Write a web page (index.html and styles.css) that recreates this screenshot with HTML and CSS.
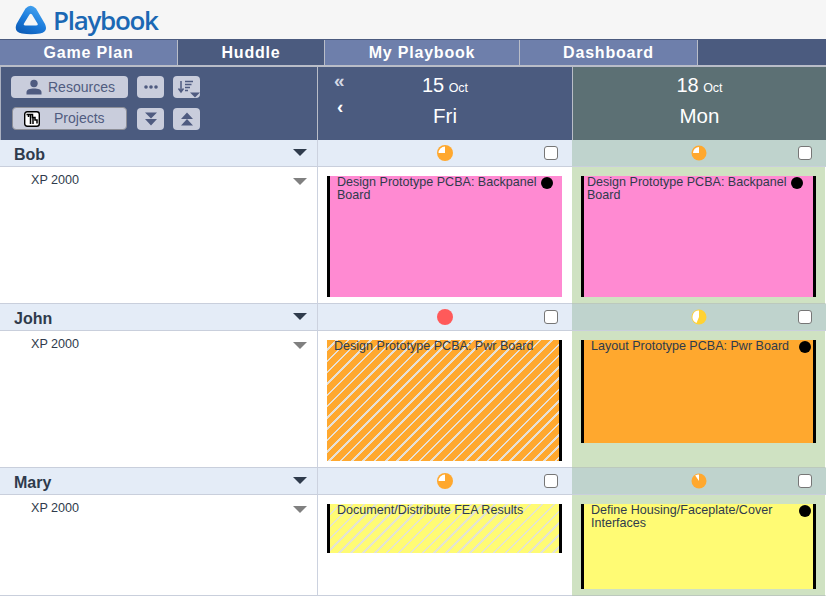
FILE: index.html
```html
<!DOCTYPE html>
<html lang="en">
<head>
<meta charset="utf-8">
<title>Playbook</title>
<link rel="stylesheet" href="styles.css">
</head>
<body>
<div class="page">
  <header class="brand">
    <svg class="logo" width="32" height="30" viewBox="0 0 32 30">
      <defs>
        <linearGradient id="lg" x1="0.750" y1="0" x2="0.150" y2="1">
          <stop offset="0" stop-color="#4aa8f2"/>
          <stop offset="0.500" stop-color="#1c7cdc"/>
          <stop offset="1" stop-color="#0c5ab4"/>
        </linearGradient>
      </defs>
      <path fill="url(#lg)" fill-rule="evenodd" d="M10.500 3.500 Q15.500 -2 21 3.500 L30 19 Q33.500 27 25 28.500 Q16 30 7 28.500 Q-1.500 27 1.500 19 Z M14.500 9.500 L9 18.500 Q8 20.500 10.500 20.500 H21 Q23.500 20.500 22.500 18.500 L17 9.500 Q15.800 7.800 14.500 9.500 Z"/>
    </svg>
    <span class="wordmark">Playbook</span>
  </header>

  <nav class="tabs">
    <a class="tab tab-gameplan">Game Plan</a>
    <a class="tab tab-huddle tab-active">Huddle</a>
    <a class="tab tab-my">My Playbook</a>
    <a class="tab tab-dash">Dashboard</a>
  </nav>

  <main class="board">
    <div class="toolbar">
      <div class="tool-row">
        <button class="btn btn-wide">
          <svg width="16" height="16" viewBox="0 0 16 16"><circle cx="8" cy="4.500" r="3.700" fill="#4f5b80"/><path d="M0.500 15.500 V13 C0.500 10.500 4 9.500 8 9.500 C12 9.500 15.500 10.500 15.500 13 V15.500 Z" fill="#4f5b80"/></svg>
          <span class="btn-label">Resources</span>
        </button>
        <button class="btn btn-icon">
          <svg width="16" height="6" viewBox="0 0 16 6"><circle cx="3" cy="3" r="1.800" fill="#4f5b80"/><circle cx="8" cy="3" r="1.800" fill="#4f5b80"/><circle cx="13" cy="3" r="1.800" fill="#4f5b80"/></svg>
        </button>
        <button class="btn btn-icon btn-sort">
          <svg width="27" height="22" viewBox="0 0 27 22">
            <path d="M8 5 V15 M5.500 12.500 L8 16 L10.500 12.500" fill="none" stroke="#4f5b80" stroke-width="1.500"/>
            <path d="M12 5.500 H20 M12 8.500 H18.500 M12 11.500 H17 M12 14.500 H15" stroke="#4f5b80" stroke-width="1.500"/>
            <path d="M17 16.500 H27 L22 21.500 Z" fill="#4f5b80"/>
          </svg>
        </button>
      </div>
      <div class="tool-row">
        <button class="btn btn-wide btn-outline">
          <svg width="16" height="16" viewBox="0 0 16 16">
            <rect x="0.700" y="0.700" width="14.600" height="14.600" rx="2.500" fill="#fff" stroke="#000" stroke-width="1.400"/>
            <path d="M2.500 3.500 H8.500 V6.500 H11 V9 H13 V12.500 M4.500 3.500 V6 M6.500 3.500 V13 M9 6.500 V13" fill="none" stroke="#000" stroke-width="1.500"/>
          </svg>
          <span class="btn-label btn-label-projects">Projects</span>
        </button>
        <button class="btn btn-icon btn-square">
          <svg width="14" height="14" viewBox="0 0 14 14"><path d="M1 0.500 H13 L7 6.500 Z M1 7 H13 L7 13.500 Z" fill="#4f5b80"/></svg>
        </button>
        <button class="btn btn-icon btn-square">
          <svg width="14" height="14" viewBox="0 0 14 14"><path d="M7 0.500 L13 7 H1 Z M7 7 L13 13.500 H1 Z" fill="#4f5b80"/></svg>
        </button>
      </div>
    </div>

    <div class="day day-first">
      <div class="day-nav">
        <span class="arrow arrow-double">«</span>
        <span class="arrow arrow-single">‹</span>
      </div>
      <div class="day-title">
        <div class="day-date"><span class="day-num">15</span> <span class="day-month">Oct</span></div>
        <div class="day-name">Fri</div>
      </div>
    </div>
    <div class="day day-today">
      <div class="day-nav"></div>
      <div class="day-title">
        <div class="day-date"><span class="day-num">18</span> <span class="day-month">Oct</span></div>
        <div class="day-name">Mon</div>
      </div>
    </div>

    <!-- Bob -->
    <div class="person"><span class="person-name">Bob</span><span class="tri tri-dark"></span></div>
    <div class="day-head">
      <svg class="pie" width="16" height="16" viewBox="0 0 16 16"><circle cx="8" cy="8" r="8" fill="#ffa82e"/><path d="M8 8 H1.500 A6.500 6.500 0 0 1 8 1.500 Z" fill="#fff"/></svg>
      <input class="check" type="checkbox">
    </div>
    <div class="day-head day-head-today">
      <svg class="pie" width="16" height="16" viewBox="0 0 16 16"><circle cx="8" cy="8" r="7.500" fill="#ffa82e"/><path d="M8 8 H2 A6 6 0 0 1 8 2 Z" fill="#fff"/></svg>
      <input class="check" type="checkbox">
    </div>
    <div class="project"><span class="project-name">XP 2000</span><span class="tri tri-grey"></span></div>
    <div class="slot">
      <div class="card card-pink edge-left h-tall">
        <span class="card-text">Design Prototype PCBA: Backpanel Board</span>
        <i class="dot dot-bob-first"></i>
      </div>
    </div>
    <div class="slot slot-today">
      <div class="card card-pink edge-left edge-right h-tall pad-tight">
        <span class="card-text">Design Prototype PCBA: Backpanel Board</span>
        <i class="dot dot-bob-today"></i>
      </div>
    </div>

    <!-- John -->
    <div class="person"><span class="person-name">John</span><span class="tri tri-dark"></span></div>
    <div class="day-head">
      <svg class="pie" width="16" height="16" viewBox="0 0 16 16"><circle cx="8" cy="8" r="8" fill="#ff5a5a"/></svg>
      <input class="check" type="checkbox">
    </div>
    <div class="day-head day-head-today">
      <svg class="pie" width="16" height="16" viewBox="0 0 16 16"><circle cx="8" cy="8" r="7.500" fill="#ffd233"/><path d="M8 8 L5.500 14 A6.500 6.500 0 0 1 8 1.500 Z" fill="#fff"/></svg>
      <input class="check" type="checkbox">
    </div>
    <div class="project"><span class="project-name">XP 2000</span><span class="tri tri-grey"></span></div>
    <div class="slot">
      <div class="card card-orange-striped edge-right h-tall">
        <span class="card-text">Design Prototype PCBA: Pwr Board</span>
      </div>
    </div>
    <div class="slot slot-today">
      <div class="card card-orange edge-left edge-right h-mid">
        <span class="card-text">Layout Prototype PCBA: Pwr Board</span>
        <i class="dot"></i>
      </div>
    </div>

    <!-- Mary -->
    <div class="person"><span class="person-name">Mary</span><span class="tri tri-dark"></span></div>
    <div class="day-head">
      <svg class="pie" width="16" height="16" viewBox="0 0 16 16"><circle cx="8" cy="8" r="8" fill="#ffa82e"/><path d="M8 8 H1.500 A6.500 6.500 0 0 1 8 1.500 Z" fill="#fff"/></svg>
      <input class="check" type="checkbox">
    </div>
    <div class="day-head day-head-today">
      <svg class="pie" width="16" height="16" viewBox="0 0 16 16"><circle cx="8" cy="8" r="7.500" fill="#ffa82e"/><path d="M8 8 L4.200 2.500 A6.500 6.500 0 0 1 8 1.500 Z" fill="#fff"/></svg>
      <input class="check" type="checkbox">
    </div>
    <div class="project project-last"><span class="project-name">XP 2000</span><span class="tri tri-grey"></span></div>
    <div class="slot slot-last">
      <div class="card card-yellow-striped edge-left edge-right h-short">
        <span class="card-text">Document/Distribute FEA Results</span>
      </div>
    </div>
    <div class="slot slot-today slot-last">
      <div class="card card-yellow edge-left edge-right h-long">
        <span class="card-text">Define Housing/Faceplate/Cover Interfaces</span>
        <i class="dot"></i>
      </div>
    </div>
  </main>
</div>
</body>
</html>
```

FILE: styles.css
```css
* { box-sizing: border-box; }

html, body {
  margin: 0;
  padding: 0;
  background: #fff;
}

.page {
  width: 826px;
  height: 596px;
  overflow: hidden;
  font-family: "Liberation Sans", Arial, sans-serif;
  color: #2f3b4c;
}

/* Brand */
.brand {
  height: 39px;
  background: #f6f6f6;
  display: flex;
  align-items: center;
  padding-left: 15px;
  gap: 6px;
}

.wordmark {
  font-family: "Open Sans", sans-serif;
  font-size: 26px;
  font-weight: 600;
  letter-spacing: -1.300px;
  color: #1b68b4;
  line-height: 30px;
  padding-top: 1px;
}

/* Tabs */
.tabs {
  height: 28px;
  display: flex;
  background: #4b5b7f;
  border-top: 1px solid #4b5b7f;
  border-bottom: 2px solid #b9bdc8;
}

.tab {
  display: flex;
  align-items: center;
  justify-content: center;
  background: #6e7fab;
  color: #fff;
  font-size: 16px;
  font-weight: 700;
  letter-spacing: 0.800px;
  border-right: 1px solid #b9bdc8;
}

.tab-active { background: #4b5b7f; }
.tab-gameplan { width: 178px; }
.tab-huddle { width: 147px; }
.tab-my { width: 195px; }
.tab-dash { width: 178px; }

/* Board grid */
.board {
  display: grid;
  grid-template-columns: 318px 254px 254px;
  grid-template-rows: 73px 27px 137px 27px 137px 27px 101px;
}

/* Toolbar */
.toolbar {
  background: #4b5b7f;
  border-left: 1px solid #aab0c0;
  border-right: 1px solid #b9bdc8;
  padding: 9px 0 0 10px;
  display: flex;
  flex-direction: column;
  gap: 9px;
}

.tool-row {
  display: flex;
  gap: 9px;
}

.btn {
  height: 22px;
  border: 0;
  padding: 0;
  background: #c9cddc;
  border-radius: 4px;
  color: #505c80;
  font-family: inherit;
  font-size: 14px;
  display: flex;
  align-items: center;
  justify-content: center;
}

.btn-wide {
  width: 117px;
  justify-content: flex-start;
  padding-left: 15px;
  gap: 6px;
}

.btn-outline {
  height: 23px;
  width: 115px;
  margin: 0 1px;
  border: 1px solid #8d8f98;
  padding-left: 11px;
  padding-bottom: 2px;
}

.btn-outline svg { margin-top: 2px; }

.btn-label-projects {
  margin-left: 8px;
}

.btn-icon { width: 27px; }
.btn-square { margin-top: 1px; }

.btn-sort svg { display: block; }

/* Day headers */
.day {
  display: grid;
  grid-template-columns: 1fr auto 1fr;
  color: #fff;
  text-align: center;
}

.day-first { background: #4b5b7f; }

.day-today {
  background: #5c7074;
  border-left: 1px solid #b9bdc8;
}

.day-nav {
  display: flex;
  flex-direction: column;
  align-items: flex-start;
  padding: 1px 0 0 16px;
}

.arrow {
  font-weight: 700;
  line-height: 26px;
  height: 26px;
}

.arrow-double {
  font-size: 19px;
  color: #d4d8e4;
}

.arrow-single {
  font-size: 19px;
  padding-left: 3px;
  color: #fff;
}

.day-date {
  padding-top: 6px;
  height: 35px;
  line-height: 24px;
}

.day-num { font-size: 20px; }
.day-month { font-size: 12.500px; }

.day-name {
  font-size: 20.500px;
  line-height: 26px;
  margin-top: 1px;
}

/* Rows */
.person {
  background: #e4ecf7;
  border-right: 1px solid #ccd2df;
  border-bottom: 1px solid #c9cfdc;
  display: flex;
  align-items: center;
  justify-content: space-between;
  padding: 3px 10px 0 14px;
}

.person-name {
  font-size: 16px;
  font-weight: 700;
  color: #2f3b4c;
}

.tri {
  width: 0;
  height: 0;
  border-left: 7px solid transparent;
  border-right: 7px solid transparent;
}

.tri-dark { border-top: 7px solid #2f3b4c; margin-top: -4px; }
.tri-grey { border-top: 7px solid #808080; margin-top: 5px; }

.day-head {
  background: #e4ecf7;
  border-bottom: 1px solid #c9cfdc;
  display: grid;
  grid-template-columns: 1fr auto 1fr;
  align-items: center;
  padding-right: 14px;
}

.day-head .pie { grid-column: 2; margin-left: 14px; }
.day-head .check { grid-column: 3; justify-self: end; }

.day-head-today {
  background: #bfd3cd;
}

.pie { display: block; }

.check {
  appearance: none;
  margin: 0;
  width: 14px;
  height: 14px;
  background: #fff;
  border: 1px solid #767676;
  border-radius: 3px;
}

.project {
  background: #fff;
  border-right: 1px solid #ccd2df;
  border-bottom: 1px solid #c9cfdc;
  display: flex;
  align-items: flex-start;
  justify-content: space-between;
  padding: 6px 10px 0 31px;
}

.project-name {
  font-size: 12.600px;
  line-height: 14px;
  color: #2f3b4c;
}

.slot {
  background: #fff;
  border-bottom: 1px solid #c9cfdc;
  padding: 9px 10px 0 9px;
}

.slot-today {
  background: #cfe2c2;
  border-right: 1px solid #fff;
  border-bottom: 1px solid #bcc9bd;
  padding-right: 9px;
}

/* Cards */
.card {
  display: flex;
  justify-content: space-between;
  align-items: flex-start;
  padding: 0 7px;
  font-size: 12.550px;
  line-height: 13px;
  color: #2f3b4c;
}

.card-text {
  display: block;
}

.edge-left { border-left: 3px solid #000; }
.edge-right { border-right: 3px solid #000; }
.pad-tight { padding-left: 3px; }

.h-tall { height: 121px; }
.h-mid { height: 103px; }
.h-short { height: 49px; }
.h-long { height: 85px; }

.card-pink { background: #ff8ad2; }
.card-orange { background: #ffa82e; }
.card-yellow { background: #fffb74; }

.card-orange-striped {
  background: repeating-linear-gradient(135deg, #ffa82e 0, #ffa82e 6.200px, #e6e0d6 6.200px, #e6e0d6 8px);
}

.card-yellow-striped {
  background: repeating-linear-gradient(135deg, #fffb74 0, #fffb74 6.600px, #e4e4d0 6.600px, #e4e4d0 8.400px);
}

.dot {
  flex: none;
  width: 12px;
  height: 12px;
  border-radius: 50%;
  background: #000;
  margin: 1px -5px 0 0;
}

.dot-bob-first { margin-right: 2px; }
.dot-bob-today { margin-right: 3px; }
```
